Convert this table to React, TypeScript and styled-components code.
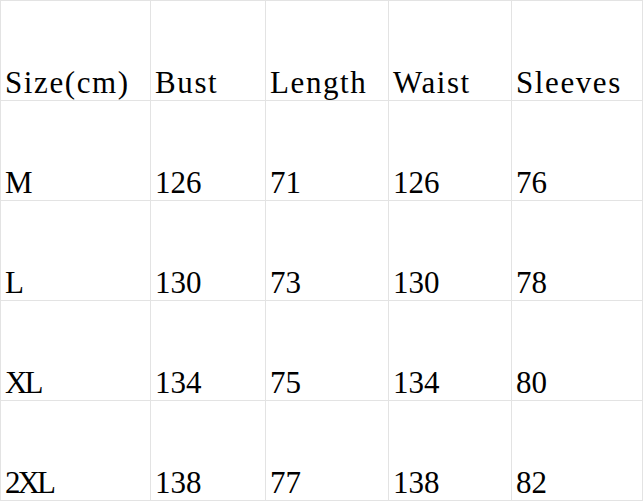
import * as React from 'react';
import styled, { createGlobalStyle } from 'styled-components';

const GlobalStyle = createGlobalStyle`
    html, body {
        margin: 0;
        padding: 0;
        background: #ffffff;
    }
`;

const columns = [150, 115, 123, 123, 131];

const header = ['Size(cm)', 'Bust', 'Length', 'Waist', 'Sleeves'];

const rows = [
    ['M', '126', '71', '126', '76'],
    ['L', '130', '73', '130', '78'],
    ['XL', '134', '75', '134', '80'],
    ['2XL', '138', '77', '138', '82'],
];

const SizeChart: React.FC = () => {
    return (
        <>
            <GlobalStyle />
            <Grid>
                {header.map((label) => (
                    <Cell key={label} $head>
                        {label}
                    </Cell>
                ))}
                {rows.map((row) =>
                    row.map((value, i) => (
                        <Cell key={row[0] + i} $tight={i === 0}>
                            {value}
                        </Cell>
                    ))
                )}
            </Grid>
        </>
    );
};

const Grid = styled.div`
    display: grid;
    grid-template-columns: ${columns.map((w) => `${w}px`).join(' ')};
    grid-auto-rows: 100px;
    width: max-content;
    border-left: 1px solid #e3e3e3;
    border-top: 1px solid #e3e3e3;
`;

const Cell = styled.div<{ $head?: boolean; $tight?: boolean }>`
    display: flex;
    align-items: flex-end;
    box-sizing: border-box;
    border-right: 1px solid #e3e3e3;
    border-bottom: 1px solid #e3e3e3;
    padding: 0 0 2px 4px;
    font-family: 'Liberation Serif', 'Times New Roman', serif;
    font-size: 31px;
    line-height: 1;
    color: #000000;
    white-space: nowrap;
    letter-spacing: ${(p) => (p.$head ? '1.6px' : p.$tight ? '-3px' : '0')};
`;

export default SizeChart;
